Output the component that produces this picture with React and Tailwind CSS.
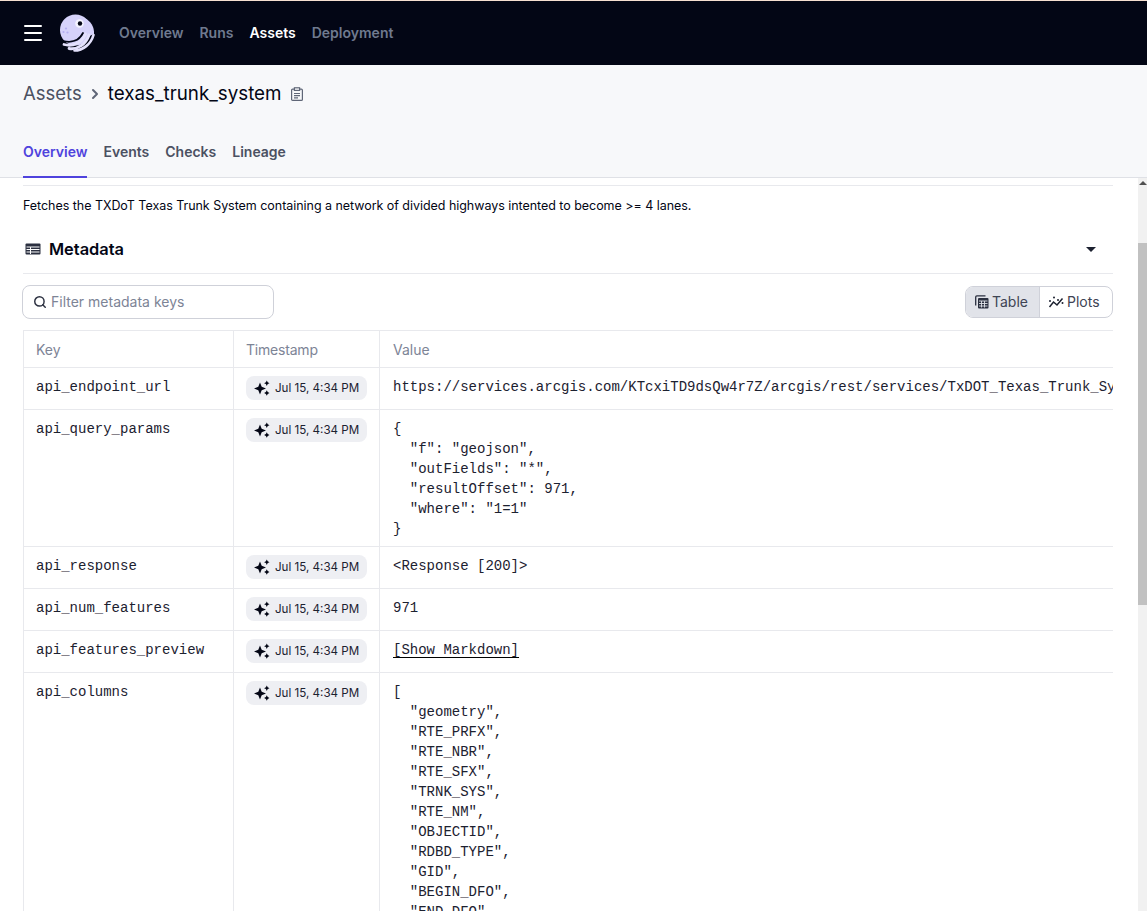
import { Search, Menu, ChevronRight } from 'lucide-react';

const ROWS = [
  { key: 'api_endpoint_url', lines: ['https://services.arcgis.com/KTcxiTD9dsQw4r7Z/arcgis/rest/services/TxDOT_Texas_Trunk_System/FeatureServer/0/query'] },
  { key: 'api_query_params', lines: ['{', '  "f": "geojson",', '  "outFields": "*",', '  "resultOffset": 971,', '  "where": "1=1"', '}'] },
  { key: 'api_response', lines: ['<Response [200]>'] },
  { key: 'api_num_features', lines: ['971'] },
  { key: 'api_features_preview', link: '[Show Markdown]' },
  {
    key: 'api_columns',
    lines: ['[', '  "geometry",', '  "RTE_PRFX",', '  "RTE_NBR",', '  "RTE_SFX",', '  "TRNK_SYS",', '  "RTE_NM",', '  "OBJECTID",', '  "RDBD_TYPE",', '  "GID",', '  "BEGIN_DFO",', '  "END_DFO",'],
  },
];

function Logo() {
  return (
    <svg width="38" height="38" viewBox="0 0 38 38" fill="none">
      <circle cx="17.500" cy="16" r="15.500" fill="#d6d2fa" />
      <path d="M26 4c7 3 10.500 9 10 16L27 24Z" fill="#d6d2fa" />
      <path d="M5 27C13 29 21 27 25 19" stroke="#030615" strokeWidth="1.800" strokeLinecap="round" />
      <path d="M6 30.500C15 33 24 29 27.500 20" stroke="#e4e1fc" strokeWidth="2.800" strokeLinecap="round" />
      <path d="M11 34.500C20 36 28 30 31 21" stroke="#e4e1fc" strokeWidth="2.800" strokeLinecap="round" />
      <path d="M16.500 36.500C25 36.500 33 30 35.500 21" stroke="#e4e1fc" strokeWidth="2.600" strokeLinecap="round" />
      <circle cx="21.500" cy="9.500" r="4.300" fill="#f4f3ff" />
      <circle cx="22" cy="9.500" r="2.200" fill="#030615" />
      <circle cx="8" cy="14.500" r="1.100" fill="#b5aef0" />
      <circle cx="5.500" cy="18" r="1.100" fill="#b5aef0" />
      <circle cx="9.500" cy="18.500" r="1.100" fill="#b5aef0" />
    </svg>
  );
}

function Sparkle() {
  return (
    <svg width="16" height="16" viewBox="0 0 16 16" fill="#030615" className="shrink-0">
      <path d="M6 2.500 7.700 6.800 12 8.500 7.700 10.200 6 14.500 4.300 10.200 0 8.500 4.300 6.800Z" />
      <path d="M12.800 0.500 13.700 2.300 15.500 3.200 13.700 4.100 12.800 5.900 11.900 4.100 10.100 3.200 11.900 2.300Z" />
      <path d="M12.800 10.300 13.700 12.100 15.500 13 13.700 13.900 12.800 15.700 11.900 13.900 10.100 13 11.900 12.100Z" />
    </svg>
  );
}

function ClipboardIcon() {
  return (
    <svg width="14" height="14" viewBox="0 0 14 14" fill="none" stroke="#5f6677" strokeWidth="1.200">
      <rect x="1.600" y="2.200" width="10.800" height="11.200" rx="1" />
      <rect x="4.400" y="0.800" width="5.200" height="2.600" fill="#f7f8fa" />
      <path d="M4 6.500h6M4 8.700h6M4 10.900h4" />
    </svg>
  );
}

function TableIcon() {
  return (
    <svg width="16" height="16" viewBox="0 0 16 16" fill="none" className="shrink-0">
      <path d="M1.700 11.500V3a1.200 1.200 0 0 1 1.200-1.200h8.600" stroke="#2b3040" strokeWidth="1.300" />
      <rect x="4" y="4" width="10.500" height="10.500" rx="1" fill="#2b3040" />
      <path d="M5 7h8.500M5 9.500h8.500M5 12h8.500M7.500 7v6.500M10.500 7v6.500" stroke="#e1e3e9" strokeWidth="0.900" />
    </svg>
  );
}

function PlotsIcon() {
  return (
    <svg width="16" height="16" viewBox="0 0 16 16" fill="none" className="shrink-0">
      <path d="M1.500 13 5.500 8l3.500 3 5.500-6.500" stroke="#1c2130" strokeWidth="1.500" />
      <circle cx="2" cy="7" r="1" fill="#1c2130" />
      <circle cx="6" cy="3.500" r="1" fill="#1c2130" />
      <circle cx="10" cy="6" r="1" fill="#1c2130" />
      <circle cx="14.500" cy="9" r="1" fill="#1c2130" />
    </svg>
  );
}

function MetadataIcon() {
  return (
    <svg width="16" height="12" viewBox="0 0 16 12" className="shrink-0">
      <rect x="0.500" y="0.500" width="15" height="11" rx="1" fill="#2b3040" />
      <path d="M1.500 4h13M1.500 6.500h13M1.500 9h13M5.500 4v7" stroke="#fff" strokeWidth="1" />
    </svg>
  );
}

function MetaRow({ row }) {
  return (
    <tr className="border-t border-[#e8e9ed] align-top">
      <td className="border-r border-[#e8e9ed] px-3 pt-[9px] pb-[7px] text-[#1c2130]">{row.key}</td>
      <td className="border-r border-[#e8e9ed] px-3 pt-2 pb-[9px]">
        <span className="flex h-6 w-[121px] items-center gap-[5px] rounded-lg bg-[#eeeff3] pl-2 font-['Inter',sans-serif] text-[11.6px] text-[#1c2130]">
          <Sparkle />
          Jul 15, 4:34 PM
        </span>
      </td>
      <td className="pl-[13px] pt-[9px] pb-[7px] whitespace-pre text-[#1c2130]">
        {row.link ? <span className="underline decoration-black underline-offset-[3px]">{row.link}</span> : row.lines.join('\n')}
      </td>
    </tr>
  );
}

export default function App() {
  return (
    <div className="flex h-[911px] flex-col overflow-hidden bg-white font-['Inter',sans-serif]">
      {/* Top nav */}
      <header className="flex h-[65px] shrink-0 items-center border-t border-[#f6dfd0] bg-[#030615] pl-6">
        <Menu size={24} color="#fff" strokeWidth={2} className="-ml-[3px]" />
        <div className="ml-[13px]">
          <Logo />
        </div>
        <nav className="ml-[23px] flex gap-4 text-sm font-semibold text-[#6f7a8f]">
          <span>Overview</span>
          <span>Runs</span>
          <span className="text-white">Assets</span>
          <span>Deployment</span>
        </nav>
      </header>

      {/* Page header */}
      <div className="h-[113px] shrink-0 border-b border-[#dfe1e6] bg-[#f7f8fa] px-[23px]">
        <div className="flex h-[57px] items-center pt-px text-[18.5px]">
          <span className="text-[#4b5162]">Assets</span>
          <ChevronRight size={16} strokeWidth={3} color="#5f6677" className="ml-[5px] mr-[5px]" />
          <span className="text-[18.8px] text-[#030615]">texas_trunk_system</span>
          <span className="ml-[8px]">
            <ClipboardIcon />
          </span>
        </div>
        <div className="mt-[9px] flex gap-4 text-sm font-semibold text-[#4b5162]">
          <span className="h-[47px] border-b-2 border-[#4f43dd] pt-[11px] text-[#4f43dd]">Overview</span>
          <span className="pt-[11px]">Events</span>
          <span className="pt-[11px]">Checks</span>
          <span className="pt-[11px]">Lineage</span>
        </div>
      </div>

      {/* Body */}
      <div className="flex min-h-0 flex-1">
        <main className="min-w-0 flex-1 overflow-hidden pl-[23px] pr-[25px] pt-[7px]">
          <div className="border-t border-[#e8e9ed] pt-[11px] text-[12.5px] leading-[18px] tracking-[-0.04px] text-[#030615]">
            Fetches the TXDoT Texas Trunk System containing a network of divided highways intented to become &gt;= 4 lanes.
          </div>

          <div className="mt-[11px] flex h-[48px] items-center justify-between border-b border-[#e8e9ed] pr-[17px]">
            <div className="flex items-center gap-2 pl-[2px]">
              <MetadataIcon />
              <span className="text-[16.4px] font-semibold text-[#030615]">Metadata</span>
            </div>
            <span className="h-0 w-0 border-x-[5px] border-t-[5px] border-x-transparent border-t-[#1c2130]" />
          </div>

          <div className="mt-[11px] flex items-center justify-between">
            <div className="-ml-px flex h-[34px] w-[252px] items-center gap-1 rounded-lg border border-[#cfd1d9] pl-[10px] text-sm text-[#7d8496]">
              <Search size={14} color="#2b3040" strokeWidth={2.500} />
              Filter metadata keys
            </div>
            <div className="flex h-8 w-[148px] overflow-hidden rounded-lg border border-[#cfd1d9] text-sm text-[#3e4454]">
              <span className="flex w-[74px] items-center gap-[2px] border-r border-[#cfd1d9] bg-[#e1e3e9] pl-2">
                <TableIcon />
                Table
              </span>
              <span className="flex flex-1 items-center gap-[3px] pl-2">
                <PlotsIcon />
                Plots
              </span>
            </div>
          </div>

          <div className="mt-[11px] overflow-hidden">
            <table className="w-[1300px] table-fixed border-l border-t border-[#e8e9ed] font-['Liberation_Mono',monospace] text-sm leading-5">
              <colgroup>
                <col className="w-[210px]" />
                <col className="w-[146px]" />
                <col />
              </colgroup>
              <thead>
                <tr className="h-[37px] text-left font-['Inter',sans-serif] text-[#7d8496]">
                  <th className="border-r border-[#e8e9ed] pl-3 pt-px font-normal">Key</th>
                  <th className="border-r border-[#e8e9ed] pl-3 pt-px font-normal tracking-[-0.2px]">Timestamp</th>
                  <th className="pl-[13px] pt-px font-normal">Value</th>
                </tr>
              </thead>
              <tbody>
                {ROWS.map((row) => (
                  <MetaRow key={row.key} row={row} />
                ))}
              </tbody>
            </table>
          </div>
        </main>

        {/* Scrollbar */}
        <div className="flex w-[9px] shrink-0 flex-col bg-[#f1f1f1]">
          <div className="mt-[3px] flex justify-center">
            <span className="h-0 w-0 border-x-[4px] border-b-[4px] border-x-transparent border-b-[#505050]" />
          </div>
          <div className="mt-[58px] h-[362px] w-full bg-[#c1c1c1]" />
        </div>
      </div>
    </div>
  );
}
